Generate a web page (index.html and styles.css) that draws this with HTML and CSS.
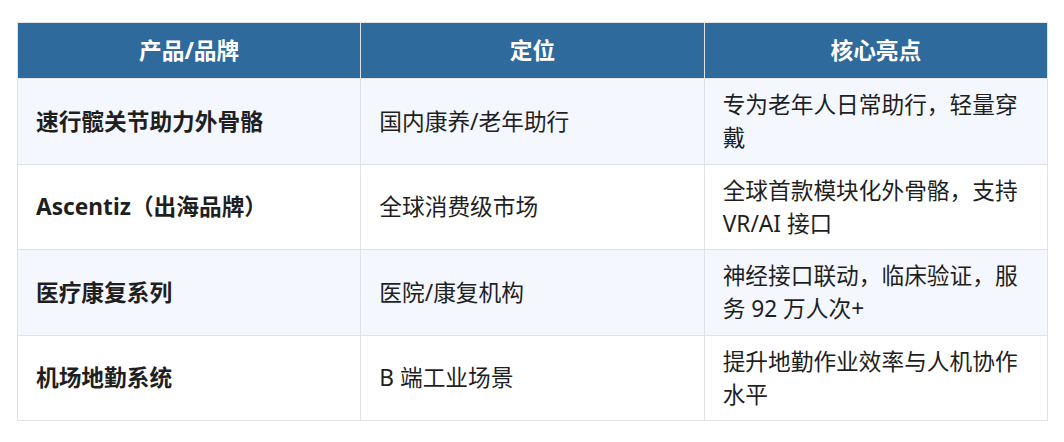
FILE: index.html
```html
<!DOCTYPE html>
<html lang="zh">
<head>
<meta charset="utf-8">
<link rel="stylesheet" href="styles.css">
</head>
<body>
<div class="wrap">
<table class="grid">
  <thead>
    <tr><th>产品/品牌</th><th>定位</th><th>核心亮点</th></tr>
  </thead>
  <tbody>
    <tr><td class="name">速行髋关节助力外骨骼</td><td>国内康养/老年助行</td><td>专为老年人日常助行，轻量穿戴</td></tr>
    <tr><td class="name">Ascentiz（出海品牌）</td><td>全球消费级市场</td><td>全球首款模块化外骨骼，支持 VR/AI 接口</td></tr>
    <tr><td class="name">医疗康复系列</td><td>医院/康复机构</td><td>神经接口联动，临床验证，服务 92 万人次+</td></tr>
    <tr><td class="name">机场地勤系统</td><td>B 端工业场景</td><td>提升地勤作业效率与人机协作水平</td></tr>
  </tbody>
</table>
</div>
</body>
</html>
```

FILE: styles.css
```css
html, body {
  margin: 0;
  padding: 0;
  background: #ffffff;
}
.wrap {
  padding: 22px 16px 0 17px;
}
.grid {
  width: 1031px;
  border-collapse: collapse;
  table-layout: fixed;
  font-family: "Noto Sans", "Noto Sans CJK SC", sans-serif;
  font-size: 22.7px;
  line-height: 33px;
  color: #1f1f1f;
}
.grid th, .grid td {
  border: 1.5px solid #dfe3e8;
  vertical-align: middle;
}
.grid th {
  background: #2e6a9c;
  color: #ffffff;
  font-weight: 700;
  text-align: center;
  padding: 11px 18px;
}
.grid td {
  text-align: left;
  padding: 9.25px 18px;
  height: 66px;
}
.grid tbody tr:nth-child(odd) td {
  background: #f4f7fd;
}
.grid td.name {
  font-weight: 700;
}
```
